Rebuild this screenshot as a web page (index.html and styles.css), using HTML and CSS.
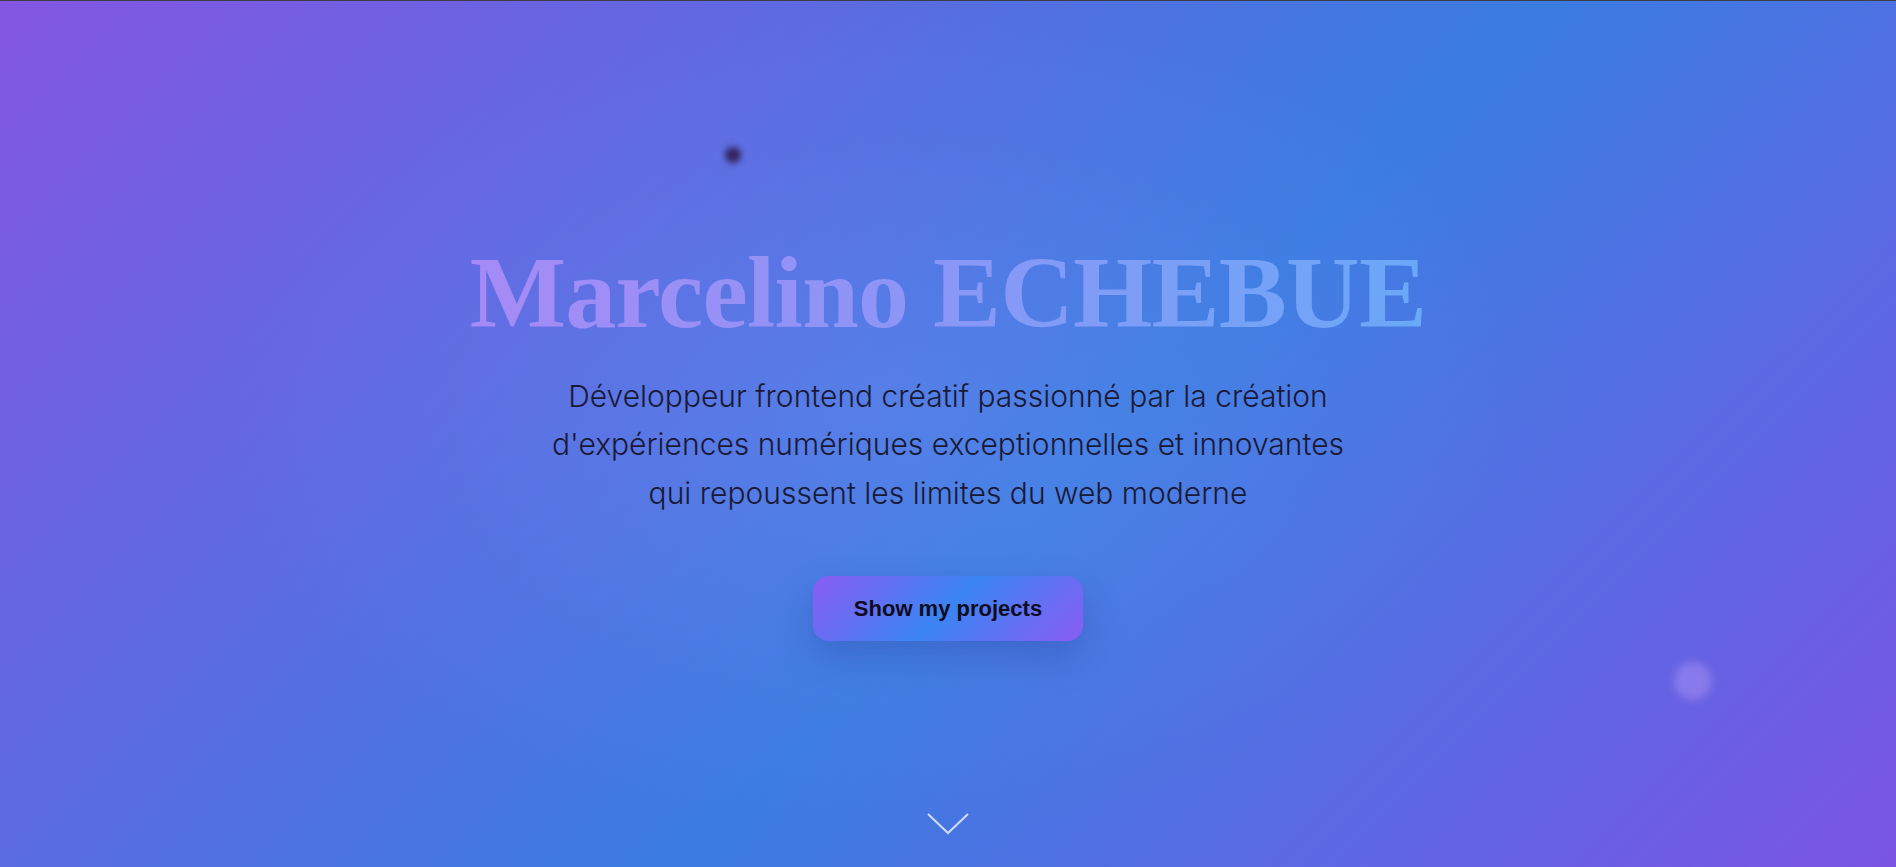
FILE: index.html
```html
<!DOCTYPE html>
<html lang="fr">
<head>
<meta charset="utf-8">
<title>Marcelino ECHEBUE</title>
<link rel="stylesheet" href="styles.css">
</head>
<body>
<section class="hero">
  <span class="particle particle-dark"></span>
  <span class="particle particle-light"></span>
  <div class="hero-content">
    <h1 class="hero-title">Marcelino ECHEBUE</h1>
    <p class="hero-text">Développeur frontend créatif passionné par la création d'expériences numériques exceptionnelles et innovantes qui repoussent les limites du web moderne</p>
    <a class="hero-button" href="#projects">Show my projects</a>
  </div>
  <a class="scroll-down" href="#projects" aria-label="Défiler">
    <svg width="42" height="22" viewBox="0 0 42 22" fill="none">
      <path d="M1 1 L21 20 L41 1" stroke="rgba(255,255,255,0.75)" stroke-width="2"/>
    </svg>
  </a>
</section>
</body>
</html>
```
FILE: styles.css
```css
* { box-sizing: border-box; }
html, body { margin: 0; padding: 0; }
body {
  font-family: Inter, "Noto Sans", sans-serif;
  overflow: hidden;
}
.hero {
  position: relative;
  height: 867px;
  border-top: 1px solid #3d3d45;
  background:
    radial-gradient(ellipse 700px 420px at 47% 48%, rgba(140, 160, 255, 0.22), rgba(140,160,255,0) 100%),
    linear-gradient(135deg, #8356e1 0%, #3a7ce1 56%, #7b55e4 100%);
  display: flex;
  flex-direction: column;
  align-items: center;
  justify-content: center;
  overflow: hidden;
}
.hero-content {
  display: flex;
  flex-direction: column;
  align-items: center;
  text-align: center;
  margin-top: 10px;
}
.hero-title {
  margin: 0;
  font-family: "Liberation Serif", "DejaVu Serif", serif;
  font-weight: 700;
  font-size: 102px;
  line-height: 1.1;
  letter-spacing: -0.8px;
  background: linear-gradient(90deg, #a68af6 0%, #8d95f6 45%, #6aa8f8 100%);
  -webkit-background-clip: text;
  background-clip: text;
  color: transparent;
}
.hero-text {
  margin: 23px 0 0;
  max-width: 805px;
  font-family: Inter, "Noto Sans", sans-serif;
  font-weight: 300;
  font-size: 30px;
  line-height: 48.5px;
  color: #1a1936;
}
.hero-button {
  margin-top: 59px;
  display: inline-block;
  padding: 20px 41px;
  border-radius: 16px;
  background: linear-gradient(135deg, #8a5cf4 0%, #3b84f4 50%, #8a5cf4 100%);
  font-family: "Liberation Sans", Arial, sans-serif;
  font-weight: 700;
  font-size: 22px;
  line-height: 25px;
  color: #0f0c1e;
  text-decoration: none;
  box-shadow: 0 16px 36px rgba(40, 60, 150, 0.32);
}
.scroll-down {
  position: absolute;
  left: 50%;
  bottom: 32px;
  transform: translateX(-50%);
  display: block;
  line-height: 0;
}
.particle {
  position: absolute;
  border-radius: 50%;
}
.particle-dark {
  left: 725px;
  top: 146px;
  width: 16px;
  height: 16px;
  background: #35225a;
  filter: blur(3px);
}
.particle-light {
  left: 1674px;
  top: 661px;
  width: 38px;
  height: 38px;
  background: rgba(200, 170, 255, 0.35);
  filter: blur(4px);
}
```
